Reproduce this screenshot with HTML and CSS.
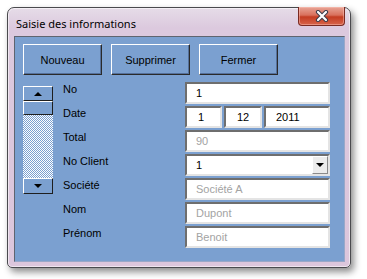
FILE: index.html
```html
<!DOCTYPE html>
<html lang="fr">
<head>
<meta charset="utf-8">
<title>Saisie des informations</title>
<link rel="stylesheet" href="styles.css">
</head>
<body>
<div class="window">
  <div class="titlebar">
    <span class="title">Saisie des informations</span>
    <div class="close">
      <svg width="14" height="12" viewBox="0 0 14 12">
        <path d="M3 2 L11 10 M11 2 L3 10" stroke="#3b3b4a" stroke-width="4.2" stroke-linecap="round" fill="none"/>
        <path d="M3 2 L11 10 M11 2 L3 10" stroke="#ffffff" stroke-width="2.2" stroke-linecap="round" fill="none"/>
      </svg>
    </div>
  </div>
  <div class="client">
    <div class="buttons">
      <div class="btn">Nouveau</div>
      <div class="btn">Supprimer</div>
      <div class="btn">Fermer</div>
    </div>
    <div class="form">
      <div class="scroll">
        <div class="sbtn"><span class="arrow up"></span></div>
        <div class="thumb"></div>
        <div class="track"></div>
        <div class="sbtn down"><span class="arrow dn"></span></div>
      </div>
      <div class="label">No</div>
      <div class="field">1</div>
      <div class="label">Date</div>
      <div class="date">
        <div class="field f1">1</div>
        <div class="field f2">12</div>
        <div class="field f3">2011</div>
      </div>
      <div class="label">Total</div>
      <div class="field gray">90</div>
      <div class="label">No Client</div>
      <div class="field combo"><span class="val">1</span><span class="drop"><span class="arrow dn"></span></span></div>
      <div class="label">Société</div>
      <div class="field gray">Société A</div>
      <div class="label">Nom</div>
      <div class="field gray">Dupont</div>
      <div class="label">Prénom</div>
      <div class="field gray">Benoit</div>
    </div>
  </div>
</div>
</body>
</html>
```

FILE: styles.css
```css
html, body {
  margin: 0;
  padding: 0;
  background: #ffffff;
  width: 367px;
  height: 279px;
  overflow: hidden;
}
body {
  padding: 7px 0 0 7px;
  box-sizing: border-box;
}
.window {
  width: 344px;
  height: 261px;
  box-sizing: border-box;
  border: 1px solid #4a4a4e;
  border-radius: 7px 7px 5px 5px;
  background: linear-gradient(180deg, #e6dce8 0%, #dcc9de 20px, #dcc6dc 100%);
  padding: 0 5px 5px 6px;
  box-shadow: 3px 4px 7px rgba(0, 0, 0, 0.45), inset 0 0 0 1px rgba(255,255,255,0.55);
  display: flex;
  flex-direction: column;
}
.titlebar {
  height: 28px;
  display: flex;
  justify-content: space-between;
  align-items: flex-start;
  flex: none;
}
.title {
  font-family: "Noto Sans", sans-serif;
  font-size: 11px;
  color: #000;
  padding: 8px 0 0 2px;
  line-height: 15px;
}
.close {
  width: 47px;
  height: 19px;
  margin-top: -1px;
  box-sizing: border-box;
  border: 1px solid #7a2a22;
  border-top: none;
  border-radius: 0 0 4px 4px;
  background: linear-gradient(180deg, #e8a597 0%, #d9705c 45%, #c43c22 55%, #d7644a 100%);
  box-shadow: inset 0 0 0 1px rgba(255, 200, 190, 0.45);
  display: flex;
  align-items: center;
  justify-content: center;
}
.client {
  flex: 1;
  background: #7ba0d0;
  box-sizing: border-box;
  border-top: 1px solid #5f6470;
  border-left: 1px solid #5f6470;
  border-right: 1px solid #9aa8c8;
  border-bottom: 1px solid #9aa8c8;
  padding: 7px 0 0 8px;
  font-family: "Liberation Sans", Arial, sans-serif;
  font-size: 11px;
  color: #000;
}
.buttons {
  display: flex;
  gap: 9px;
}
.btn {
  width: 79px;
  height: 31px;
  box-sizing: border-box;
  border-top: 1px solid #ffffff;
  border-left: 1px solid #ffffff;
  border-right: 1px solid #2a2a2a;
  border-bottom: 1px solid #2a2a2a;
  box-shadow: inset -1px -1px 0 #55709a;
  display: flex;
  align-items: center;
  justify-content: center;
}
.form {
  margin-top: 7px;
  display: grid;
  grid-template-columns: 30px 132px 145px;
  grid-auto-rows: 22px;
  row-gap: 2px;
}
.scroll {
  grid-column: 1;
  grid-row: 1 / span 5;
  margin-top: 4px;
  height: 108px;
  display: flex;
  flex-direction: column;
}
.form .label {
  grid-column: 2;
  padding-left: 10px;
  line-height: 13px;
  padding-top: 1px;
}
.form .field, .form .date {
  grid-column: 3;
}
.sbtn {
  height: 15px;
  box-sizing: border-box;
  border-top: 1px solid #ffffff;
  border-left: 1px solid #ffffff;
  border-right: 1px solid #1e1e1e;
  border-bottom: 1px solid #1e1e1e;
  display: flex;
  align-items: center;
  justify-content: center;
  background: #7ba0d0;
}
.sbtn.down {
  height: 16px;
}
.thumb {
  height: 14px;
  box-sizing: border-box;
  border-top: 1px solid #ffffff;
  border-left: 1px solid #ffffff;
  border-right: 1px solid #1e1e1e;
  border-bottom: 1px solid #1e1e1e;
  background: #7ba0d0;
}
.track {
  flex: 1;
  background: repeating-conic-gradient(#ffffff 0 25%, #7ba0d0 0 50%) 0 0 / 2px 2px;
}
.arrow {
  width: 0;
  height: 0;
  border-left: 4px solid transparent;
  border-right: 4px solid transparent;
}
.arrow.up {
  border-bottom: 4px solid #000;
}
.arrow.dn {
  border-top: 4px solid #000;
}
.field {
  box-sizing: border-box;
  height: 22px;
  background: #ffffff;
  border-top: 2px solid #6e6e6e;
  border-left: 2px solid #6e6e6e;
  border-right: 2px solid #e4e4e4;
  border-bottom: 2px solid #e4e4e4;
  padding-left: 9px;
  line-height: 18px;
  color: #000;
  white-space: nowrap;
}
.field.gray {
  color: #a3a3a3;
}
.date {
  display: flex;
  gap: 2px;
}
.date .f1 { width: 37px; padding-left: 11px; }
.date .f2 { width: 38px; padding-left: 11px; }
.date .f3 { flex: 1; padding-left: 10px; }
.combo {
  display: flex;
  justify-content: space-between;
  align-items: center;
  padding-right: 0;
}
.combo .drop {
  width: 16px;
  height: 18px;
  box-sizing: border-box;
  background: #ececec;
  border-top: 1px solid #ffffff;
  border-left: 1px solid #ffffff;
  border-right: 1px solid #8a8a8a;
  border-bottom: 1px solid #8a8a8a;
  display: flex;
  align-items: center;
  justify-content: center;
}
```
